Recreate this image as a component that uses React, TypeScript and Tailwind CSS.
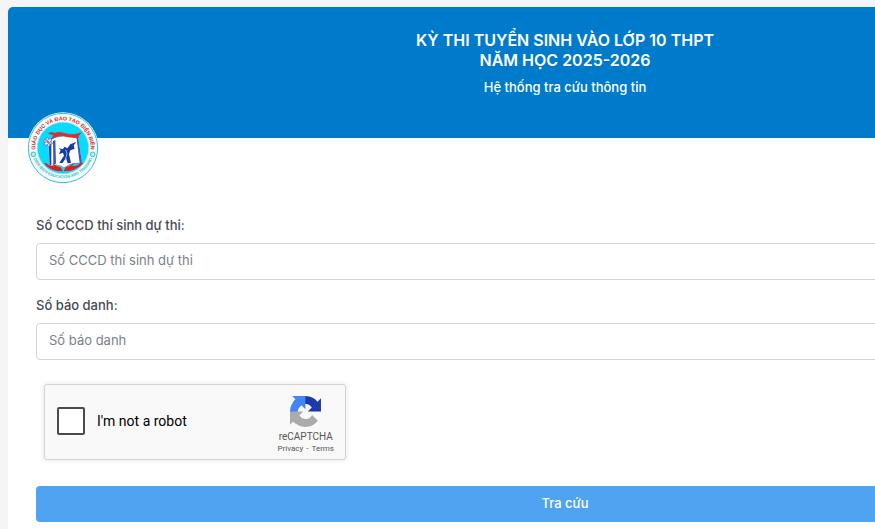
import { useId, useState } from "react";

// School emblem: text ring around an open book, flag, figure and two hands.
function Emblem() {
  return (
    <svg viewBox="38 35 216 216" className="size-[72px]" role="img" aria-label="Giáo dục và Đào tạo Điện Biên">
      <defs>
        <path id="emblem-top" d="M65 161 A83 83 0 1 1 227 161" />
        <path id="emblem-bottom" d="M53 158 A95 95 0 0 0 239 158" />
      </defs>
      <circle cx="146" cy="143" r="107" fill="#fff" />
      <circle cx="146" cy="143" r="104" fill="#f3fbfd" stroke="#35bfd8" strokeWidth="3" />
      <circle cx="146" cy="143" r="77" fill="#08dcfb" stroke="#8adbe8" strokeWidth="2" />
      <text fontFamily="Liberation Sans, sans-serif" fontSize="16" fontWeight="700" fill="#dd242b">
        <textPath href="#emblem-top" startOffset="50%" textAnchor="middle">
          GIÁO DỤC VÀ ĐÀO TẠO ĐIỆN BIÊN
        </textPath>
      </text>
      <text fontFamily="Liberation Sans, sans-serif" fontSize="12" fontWeight="700" fill="#2bbbd3">
        <textPath href="#emblem-bottom" startOffset="50%" textAnchor="middle">
          DIEN BIEN EDUCATION AND TRAINING
        </textPath>
      </text>
      <g fill="#b8edf5" stroke="#36bfd5" strokeWidth="3">
        <circle cx="57" cy="162" r="7" />
        <circle cx="235" cy="162" r="7" />
      </g>
      {/* book */}
      <path d="M102 122 L124 112 Q158 104 191 107 L203 190 Q174 184 149 204 Q130 190 106 200 Z" fill="#fff" />
      <path d="M103 124 L111 120 L111 192 L106 198 Z" fill="#2540a5" />
      <path d="M116 122 L123 119 L125 190 L117 192 Z" fill="#3a56b4" />
      <path d="M186 108 L191 107 L203 189 L196 189 Z" fill="#405ab1" />
      <path d="M106 199 Q130 188 149 203 Q174 184 203 190" fill="none" stroke="#405ab1" strokeWidth="2" />
      {/* flag */}
      <path d="M103 99 Q112 94 121 99 Q134 93 157 101 Q179 106 200 98 Q191 104 191 113 Q176 111 158 109 Q130 101 108 119 L119 105 Z" fill="#e52b2c" stroke="#d0262f" strokeWidth="2" />
      {/* figure */}
      <path d="M151 139 L159 144 L168 132 L187 124 L178 135 L181 145 L168 150 L164 162 L170 188 L160 189 L155 173 L144 189 L135 187 L149 166 L146 157 L134 162 L139 150 L133 143 L145 147 Z" fill="#183a9f" />
      <path d="M154 148 L158 160 L153 178" fill="none" stroke="#9eb7e9" strokeWidth="3" />
      {/* atom */}
      <g fill="#dceafa" stroke="#4b67b5" strokeWidth="2">
        <ellipse cx="101" cy="125" rx="14" ry="5" transform="rotate(20 101 125)" />
        <ellipse cx="101" cy="125" rx="14" ry="5" transform="rotate(80 101 125)" />
        <ellipse cx="101" cy="125" rx="14" ry="5" transform="rotate(140 101 125)" />
      </g>
      <circle cx="101" cy="125" r="3" fill="#d0353d" />
      {/* hands */}
      <g fill="#de1e27">
        <path d="M88 187 Q98 187 104 195 L119 198 L114 187 L128 198 L139 201 L146 213 L128 212 Q104 208 88 187 Z" />
        <path d="M208 187 Q196 187 189 195 L174 198 L179 187 L165 198 L154 201 L148 213 L165 212 Q189 208 208 187 Z" />
      </g>
    </svg>
  );
}

function RecaptchaLogo() {
  return (
    <svg viewBox="0 0 64 64" className="size-[31px]" aria-hidden="true">
      <path fill="#1c3aa9" d="M64 31.955l-.033-1.37V4.687l-7.16 7.16C50.948 4.674 42.033.093 32.05.093c-10.4 0-19.622 4.96-25.458 12.64l11.736 11.86a15.55 15.55 0 0 1 4.754-5.334c2.05-1.6 4.952-2.906 8.968-2.906.485 0 .86.057 1.135.163 4.976.393 9.288 3.14 11.828 7.124l-8.307 8.307L64 31.953" />
      <path fill="#4285f4" d="M31.862.094l-1.37.033H4.594l7.16 7.16C4.58 13.147 0 22.06 0 32.046c0 10.4 4.96 19.622 12.64 25.458L24.5 45.768a15.55 15.55 0 0 1-5.334-4.754c-1.6-2.05-2.906-4.952-2.906-8.968 0-.485.057-.86.163-1.135.393-4.976 3.14-9.288 7.124-11.828l8.307 8.307L31.86.095" />
      <path fill="#ababab" d="M.001 32.045l.033 1.37v25.898l7.16-7.16c5.86 7.173 14.774 11.754 24.76 11.754 10.4 0 19.622-4.96 25.458-12.64l-11.736-11.86a15.55 15.55 0 0 1-4.754 5.334c-2.05 1.6-4.952 2.906-8.968 2.906-.485 0-.86-.057-1.135-.163-4.976-.393-9.288-3.14-11.828-7.124l8.307-8.307c-10.522.04-22.4.066-27.295-.005" />
    </svg>
  );
}

function Field({ label, placeholder }: { label: string; placeholder: string }) {
  const id = useId();
  return (
    <div className="flex flex-col gap-2">
      <label htmlFor={id} className="text-[13px] leading-5 font-medium text-[#464a53]">
        {label}
      </label>
      <input
        id={id}
        type="text"
        placeholder={placeholder}
        className="h-[37px] w-full rounded border border-[#ced4da] bg-white px-3 pb-1 text-[13px] text-[#495057] outline-none placeholder:text-[#7b818b] focus:border-[#4fa3f0]"
      />
    </div>
  );
}

function Recaptcha() {
  const [checked, setChecked] = useState(false);
  return (
    <div className="ml-2 flex h-[76px] w-[302px] items-center justify-between rounded-[3px] border border-[#d3d3d3] bg-[#f9f9f9] pr-[11px] pl-3 font-[Roboto,sans-serif] shadow-[0_0_4px_1px_rgba(0,0,0,0.08)]">
      <label className="flex items-center gap-3 pb-[2px] text-sm text-black">
        <input
          type="checkbox"
          checked={checked}
          onChange={(e) => setChecked(e.target.checked)}
          className="size-7 appearance-none rounded-xs border-2 border-[#4a4a4a] bg-white checked:bg-[#4285f4]"
        />
        I'm not a robot
      </label>
      <div className="flex flex-col items-center pt-[6px] text-[#555]">
        <RecaptchaLogo />
        <span className="pt-1 text-[10px] leading-3">reCAPTCHA</span>
        <span className="flex gap-[3px] text-[8px] leading-3">
          <a href="#privacy">Privacy</a>
          <span aria-hidden="true">-</span>
          <a href="#terms">Terms</a>
        </span>
      </div>
    </div>
  );
}

export default function App() {
  return (
    <div className="flex min-h-screen flex-col overflow-x-clip bg-[#f5f5f7] px-2 pt-[7px] font-[Inter,'Noto_Sans',sans-serif]">
      {/* the card keeps its desktop width and runs past narrow windows */}
      <main className="min-w-[1114px] grow rounded-t-[5px] bg-white">
        <header className="rounded-t-[5px] bg-[#007bcb] pt-[23px] pb-[41px] text-center text-white">
          <h1 className="text-base leading-5 font-semibold">
            KỲ THI TUYỂN SINH VÀO LỚP 10 THPT
            <br />
            NĂM HỌC 2025-2026
          </h1>
          <p className="pt-[7px] text-[13px] leading-5 font-medium">Hệ thống tra cứu thông tin</p>
        </header>
        <div className="relative -mt-[26px] px-[19px]">
          <Emblem />
        </div>
        <form className="flex flex-col px-7 pt-[31px]" onSubmit={(e) => e.preventDefault()}>
          <div className="flex flex-col gap-[15px]">
            <Field label="Số CCCD thí sinh dự thi:" placeholder="Số CCCD thí sinh dự thi" />
            <Field label="Số báo danh:" placeholder="Số báo danh" />
          </div>
          <div className="pt-6 pb-[26px]">
            <Recaptcha />
          </div>
          <button type="submit" className="h-9 rounded bg-[#4fa3f0] text-[13px] font-medium text-white">
            Tra cứu
          </button>
        </form>
      </main>
    </div>
  );
}
